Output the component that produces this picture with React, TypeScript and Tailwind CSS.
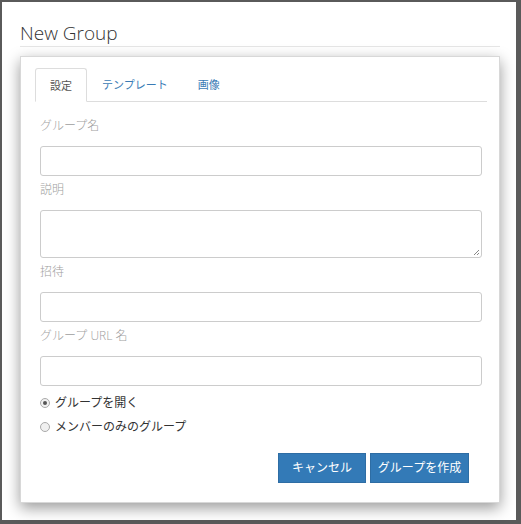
const jp = "font-['Open_Sans','Noto_Sans_CJK_JP',sans-serif]";

function Field({ label, children }: { label: string; children: React.ReactNode }) {
  return (
    <div>
      <div className="text-[12px] font-light text-[#9e9e9e] h-[20px] leading-[20px] mb-[10px]">{label}</div>
      {children}
    </div>
  );
}

export default function App() {
  return (
    <div className={`w-[521px] h-[524px] bg-[#5a5a5a] pt-[2px] pl-[2px] pr-[5px] pb-[4px] ${jp}`}>
      <div className="bg-white h-full pt-[19px] px-[18px]">
        <h1 className="text-[19px] font-light text-[#333] leading-[24px] pb-[1px] border-b border-[#e6e6e6] mr-[-2px]">
          New Group
        </h1>
        <div className="mt-[9px] w-[480px] bg-white border border-[#d8d8d8] shadow-[0_5px_14px_rgba(0,0,0,0.4)] pt-[11px] pb-[19px]">
          <div className="flex ml-[14px] mr-[12px] border-b border-[#ddd] h-[34px] text-[11px]">
            <div className="px-[14px] h-[34px] leading-[33px] border border-[#ddd] border-b-white rounded-t-[3px] bg-white text-[#555] mb-[-1px]">
              設定
            </div>
            <div className="px-[15px] leading-[33px] text-[#3a7bb5]">テンプレート</div>
            <div className="px-[15px] leading-[33px] text-[#3a7bb5]">画像</div>
          </div>
          <div className="pl-[19px] pr-[17px] mt-[14px] flex flex-col gap-[4px]">
            <Field label="グループ名">
              <div className="h-[30px] border border-[#ccc] rounded-[3px]" />
            </Field>
            <Field label="説明">
              <div className="relative h-[48px] border border-[#ccc] rounded-[3px]">
                <svg className="absolute right-[1px] bottom-[1px]" width="7" height="7" viewBox="0 0 7 7">
                  <path d="M6 1 L1 6 M6 4 L4 6" stroke="#888" strokeWidth="1" />
                </svg>
              </div>
            </Field>
            <Field label="招待">
              <div className="h-[30px] border border-[#ccc] rounded-[3px]" />
            </Field>
            <Field label="グループ URL 名">
              <div className="h-[30px] border border-[#ccc] rounded-[3px]" />
            </Field>
          </div>
          <div className="pl-[19px] mt-[7px] text-[12px] text-[#333] flex flex-col gap-[4px]">
            <label className="flex items-center gap-[5px] h-[20px] leading-[20px]">
              <span className="w-[10px] h-[10px] rounded-full border border-[#aaa] bg-[#f0f0f0] flex items-center justify-center">
                <span className="w-[4px] h-[4px] rounded-full bg-[#555]" />
              </span>
              グループを開く
            </label>
            <label className="flex items-center gap-[5px] h-[20px] leading-[20px]">
              <span className="w-[10px] h-[10px] rounded-full border border-[#aaa] bg-[#f0f0f0]" />
              メンバーのみのグループ
            </label>
          </div>
          <div className="flex justify-end gap-[4px] pr-[30px] mt-[16px]">
            <button className="h-[30px] w-[88px] bg-[#337ab7] border border-[#2e6da4] text-white text-[12px]">
              キャンセル
            </button>
            <button className="h-[30px] w-[99px] bg-[#337ab7] border border-[#2e6da4] text-white text-[12px]">
              グループを作成
            </button>
          </div>
        </div>
      </div>
    </div>
  );
}
